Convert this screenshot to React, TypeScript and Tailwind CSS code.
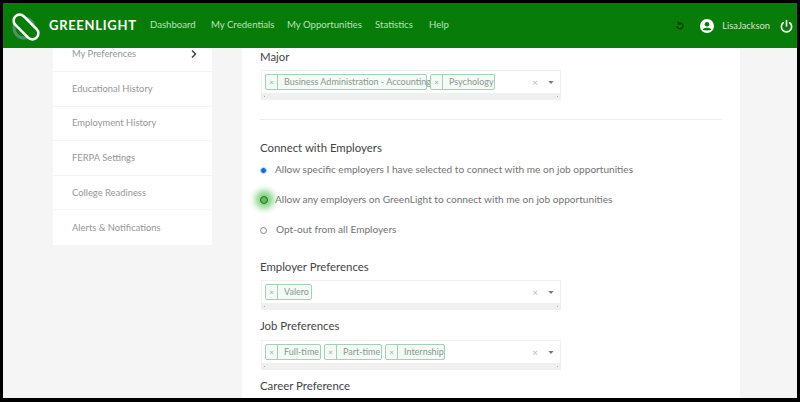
import React from 'react'

const font = { fontFamily: 'Lato, "Open Sans", sans-serif' }

const sideItems = ['My Preferences', 'Educational History', 'Employment History', 'FERPA Settings', 'College Readiness', 'Alerts & Notifications']

const Tag = ({ label, w }: { label: string; w: string }) => (
  <div className={`flex h-[16px] shrink-0 items-center rounded-[2px] border border-[#a3d0b6] bg-[#f4faf6] text-[9px] text-[#8b9690] ${w}`}>
    <span className="flex h-full w-[12px] shrink-0 items-center justify-center border-r border-[#a3d0b6] text-[8px] text-[#9aa8a0]">×</span>
    <span className="whitespace-nowrap pl-[6px]">{label}</span>
  </div>
)

const MultiSelect = ({ tags }: { tags: { label: string; w: string }[] }) => (
  <div className="flex h-[30px] w-[300px] flex-col border border-[#f0f0f0] bg-white">
    <div className="flex h-[23px] items-center gap-[3px] pl-[3px]">
      {tags.map((t) => <Tag key={t.label} {...t} />)}
      <span className="ml-auto text-[10px] text-[#bdbdbd]">×</span>
      <svg width="6" height="3" viewBox="0 0 7 4" className="ml-[7px] mr-[6px]"><path d="M0 0h7L3.5 4z" fill="#777" /></svg>
    </div>
    <div className="flex h-[6px] items-center justify-between bg-[#f0f0f0] px-[2px]">
      <span className="h-[1px] w-[1px] bg-[#aaa]" />
      <span className="h-[1px] w-[1px] bg-[#aaa]" />
    </div>
  </div>
)

const Radio = ({ kind, label }: { kind: 'on' | 'off' | 'focus'; label: string }) => (
  <div className="flex h-[30px] items-center text-[10.1px] text-[#737373]">
    <span className="relative flex w-[15px] justify-start">
      {kind === 'on' && <span className="h-[7px] w-[7px] rounded-full border border-[#cfe0f5] bg-[#0d6fdc]" />}
      {kind === 'off' && <span className="h-[7px] w-[7px] rounded-full border border-[#888] bg-white" />}
      {kind === 'focus' && (
        <>
          <span className="absolute left-[-5px] top-[-6px] h-[19px] w-[19px] rounded-full bg-[#54c254] opacity-70 blur-[3px]" />
          <span className="relative h-[8px] w-[8px] rounded-full border border-[#2c6b2c] bg-[#5bbf5b]" />
        </>
      )}
    </span>
    <span className={kind === 'off' ? 'ml-[1px]' : ''}>{label}</span>
  </div>
)

const Label = ({ children, className }: { children: React.ReactNode; className: string }) => (
  <div className={`text-[11.4px] leading-[14px] text-[#444444] ${className}`}>{children}</div>
)

const App = () => {
  return (
    <div style={font} className="flex h-[402px] w-[800px] flex-col overflow-hidden border-[3px] border-b-[4px] border-black bg-[#f5f5f5]">
      <header className="flex h-[45px] shrink-0 items-center bg-[#087c08] text-white">
        <svg width="32" height="30" viewBox="0 0 32 30" className="ml-[7px]">
          <circle cx="14" cy="17" r="10" fill="none" stroke="#4f8f68" strokeWidth="3" />
          <rect x="1" y="10" width="30" height="12" rx="6" transform="rotate(45 16 16)" fill="#087c08" stroke="#fff" strokeWidth="2.6" />
        </svg>
        <span className="ml-[7px] w-[84px] whitespace-nowrap text-[13px] font-bold tracking-[0.7px]">GREENLIGHT</span>
        <nav className="ml-[17px] flex text-[9.6px] text-[#bfe0bf]">
          <span className="w-[61px]">Dashboard</span>
          <span className="w-[76px]">My Credentials</span>
          <span className="w-[88px]">My Opportunities</span>
          <span className="w-[54px]">Statistics</span>
          <span>Help</span>
        </nav>
        <div className="ml-auto flex items-center">
          <svg width="10" height="10" viewBox="0 0 24 24" fill="none" stroke="#033f03" strokeWidth="3.5">
            <path d="M5 12a7 7 0 1 0 3-6" /><path d="M8 1v6h6" />
          </svg>
          <svg width="14" height="14" viewBox="0 0 24 24" className="ml-[15px]">
            <circle cx="12" cy="12" r="12" fill="#fff" />
            <circle cx="12" cy="9" r="4" fill="#087c08" />
            <path d="M4.5 18c2-4 13-4 15 0-2 2-13 2-15 0z" fill="#087c08" />
          </svg>
          <span className="ml-[8px] text-[9.3px] text-[#cfe8cf]">LisaJackson</span>
          <svg width="13" height="14" viewBox="0 0 24 24" fill="none" stroke="#fff" strokeWidth="3" strokeLinecap="round" className="ml-[10px] mr-[4px]">
            <path d="M12 2v10" /><path d="M6 6a9.5 9.5 0 1 0 12 0" />
          </svg>
        </div>
      </header>
      <div className="flex min-h-0 flex-1">
        <aside className="ml-[50px] w-[159px] shrink-0 self-start bg-white">
          {sideItems.map((s, i) => (
            <div key={s} className={`flex justify-between pl-[19px] pr-[15px] text-[9.4px] text-[#969696] ${i === 0 ? 'h-[24px] items-start leading-[12px] text-[#7d7d7d]' : 'h-[34.6px] items-center'} ${i < 5 ? 'border-b border-[#f4f4f4]' : ''}`}>
              {s}
              {i === 0 && <svg width="6" height="8" viewBox="0 0 6 8" fill="none" stroke="#444" strokeWidth="1.5" className="mt-[2px]"><path d="M1 .5 4.5 4 1 7.5" /></svg>}
            </div>
          ))}
        </aside>
        <main className="ml-[30px] w-[498px] shrink-0 bg-white pl-[18px] pr-[18px]">
          <Label className="mt-[2px]">Major</Label>
          <div className="mt-[6px] ml-[1px]">
            <MultiSelect tags={[
              { label: 'Business Administration - Accounting', w: 'w-[162px]' },
              { label: 'Psychology', w: 'w-[65px]' },
            ]} />
          </div>
          <div className="mt-[19px] h-px w-[462px] bg-[#eeeeee]" />
          <Label className="mt-[21px]">Connect with Employers</Label>
          <div>
            <Radio kind="on" label="Allow specific employers I have selected to connect with me on job opportunities" />
            <Radio kind="focus" label="Allow any employers on GreenLight to connect with me on job opportunities" />
            <Radio kind="off" label="Opt-out from all Employers" />
          </div>
          <Label className="mt-[15px]">Employer Preferences</Label>
          <div className="mt-[6px] ml-[1px]">
            <MultiSelect tags={[{ label: 'Valero', w: 'w-[47px]' }]} />
          </div>
          <Label className="mt-[9px]">Job Preferences</Label>
          <div className="mt-[7px] ml-[1px]">
            <MultiSelect tags={[
              { label: 'Full-time', w: 'w-[56px]' },
              { label: 'Part-time', w: 'w-[58px]' },
              { label: 'Internship', w: 'w-[60px]' },
            ]} />
          </div>
          <Label className="mt-[9px]">Career Preference</Label>
        </main>
      </div>
    </div>
  )
}

export default App
